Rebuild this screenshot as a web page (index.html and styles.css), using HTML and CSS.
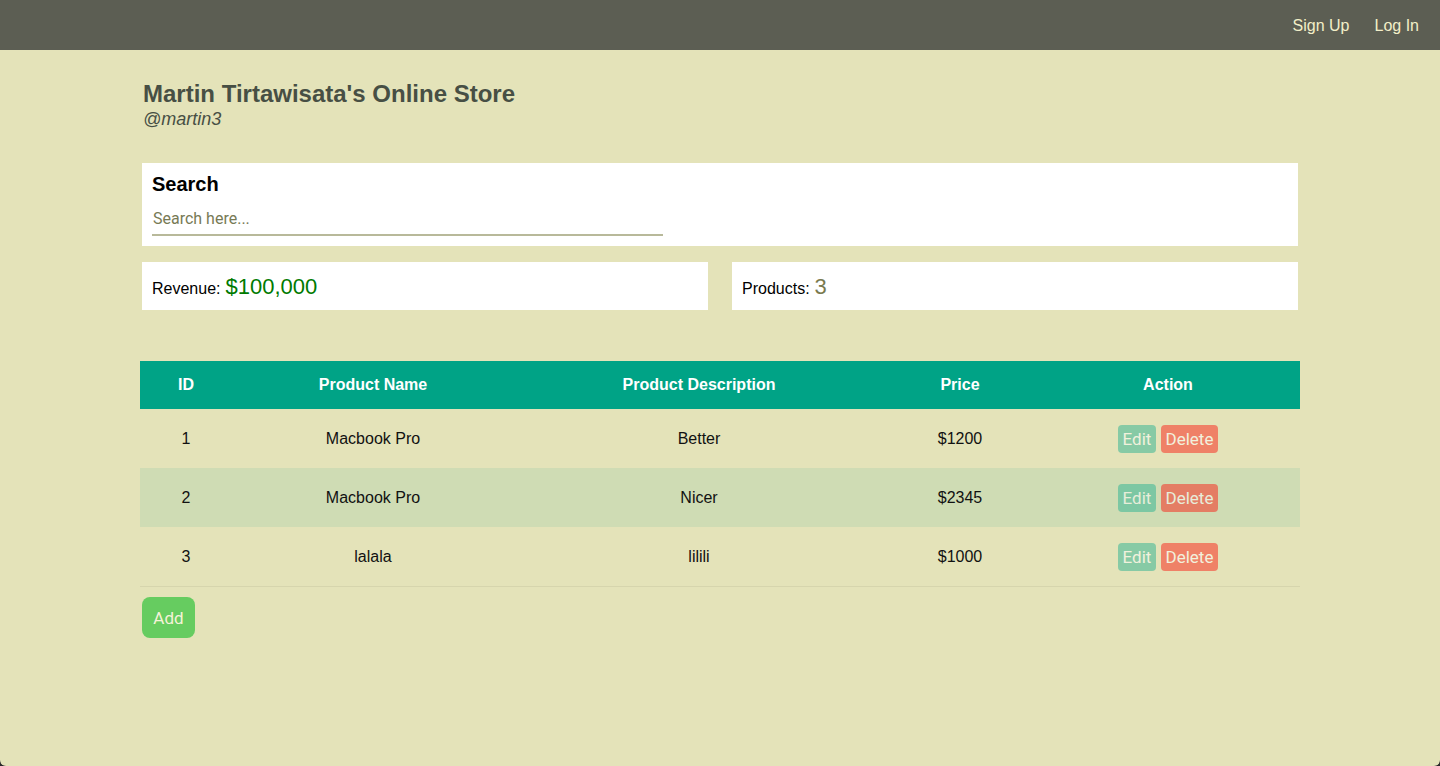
FILE: index.html
```html
<!DOCTYPE html>
<html lang="en">
<head>
<meta charset="utf-8">
<title>Martin Tirtawisata's Online Store</title>
<link rel="stylesheet" href="styles.css">
</head>
<body>
<div class="app">
  <nav class="navbar">
    <a class="nav-link" href="#">Sign Up</a>
    <a class="nav-link" href="#">Log In</a>
  </nav>
  <main class="container">
    <header class="store-header">
      <h1 class="store-title">Martin Tirtawisata's Online Store</h1>
      <div class="store-handle">@martin3</div>
    </header>
    <section class="card search-card">
      <h2 class="search-title">Search</h2>
      <input class="search-input" type="text" placeholder="Search here...">
    </section>
    <section class="stats">
      <div class="card stat-card">Revenue: <span class="stat-revenue">$100,000</span></div>
      <div class="card stat-card">Products: <span class="stat-products">3</span></div>
    </section>
    <table class="product-table">
      <colgroup>
        <col class="c-id"><col class="c-name"><col class="c-desc"><col class="c-price"><col class="c-action">
      </colgroup>
      <thead>
        <tr><th>ID</th><th>Product Name</th><th>Product Description</th><th>Price</th><th>Action</th></tr>
      </thead>
      <tbody>
        <tr><td>1</td><td>Macbook Pro</td><td>Better</td><td>$1200</td><td><button class="btn btn-edit">Edit</button><button class="btn btn-delete">Delete</button></td></tr>
        <tr class="alt"><td>2</td><td>Macbook Pro</td><td>Nicer</td><td>$2345</td><td><button class="btn btn-edit">Edit</button><button class="btn btn-delete">Delete</button></td></tr>
        <tr><td>3</td><td>lalala</td><td>lilili</td><td>$1000</td><td><button class="btn btn-edit">Edit</button><button class="btn btn-delete">Delete</button></td></tr>
      </tbody>
    </table>
    <button class="btn-add">Add</button>
  </main>
</div>
</body>
</html>
```
FILE: styles.css
```css
html {
  background: #2a2a2a;
}
body {
  margin: 0;
  font-family: "Liberation Sans", Arial, sans-serif;
}
.app {
  min-height: 766px;
  background: #e4e3b9;
  border-radius: 0 0 6px 6px;
  overflow: hidden;
}
.navbar {
  height: 50px;
  background: #5c5e53;
  display: flex;
  justify-content: flex-end;
  align-items: center;
  gap: 25px;
  padding-right: 21px;
  box-sizing: border-box;
}
.nav-link {
  color: #f3efc8;
  text-decoration: none;
  font-size: 16px;
  font-family: "Liberation Sans", Arial, sans-serif;
  padding-top: 2px;
}
.container {
  width: 1160px;
  margin: 0 auto;
  padding-top: 31px;
}
.store-header {
  padding-left: 3px;
}
.store-title {
  margin: 0;
  font-size: 24px;
  line-height: 26px;
  font-weight: bold;
  color: #474f44;
}
.store-handle {
  font-style: italic;
  font-size: 18px;
  line-height: 22px;
  color: #474f44;
  margin-top: 1px;
}
.card {
  background: #fff;
  box-sizing: border-box;
}
.search-card {
  margin: 33px 2px 0;
  height: 83px;
  padding: 10px 10px 0;
}
.search-title {
  margin: 0;
  font-size: 20px;
  line-height: 22px;
  font-weight: bold;
  color: #000;
}
.search-input {
  display: block;
  margin-top: 14px;
  width: 511px;
  box-sizing: border-box;
  border: none;
  border-bottom: 2px solid #b8b99a;
  padding: 0 1px 6px;
  font-family: Roboto, sans-serif;
  font-size: 16px;
  line-height: 19px;
  outline: none;
  background: transparent;
}
.search-input::placeholder {
  color: #777a55;
}
.stats {
  display: flex;
  gap: 24px;
  margin: 16px 2px 0;
}
.stat-card {
  flex: 1;
  height: 48px;
  padding: 6px 10px 0;
  display: flex;
  align-items: center;
  font-size: 16px;
  color: #000;
}
.stat-revenue {
  font-size: 22px;
  color: #007a00;
  margin-left: 5px;
  margin-top: -4px;
}
.stat-products {
  font-size: 22px;
  color: #7a7a4e;
  margin-left: 5px;
  margin-top: -4px;
}
.product-table {
  margin-top: 51px;
  width: 1160px;
  border-collapse: collapse;
  table-layout: fixed;
}
.c-id { width: 92px; }
.c-name { width: 282px; }
.c-desc { width: 370px; }
.c-price { width: 152px; }
.c-action { width: 264px; }
.product-table th {
  background: #00a386;
  color: #fff;
  font-weight: bold;
  font-size: 16px;
  height: 48px;
  padding: 0;
  text-align: center;
}
.product-table td {
  height: 59px;
  padding: 0;
  text-align: center;
  font-size: 16px;
  color: #111;
}
.product-table tbody tr:last-child td {
  border-bottom: 1px solid #d6d5ad;
  height: 58px;
  padding-top: 1px;
}
.product-table tr.alt td {
  background: #cfdcb4;
}
.btn {
  font-family: Roboto, sans-serif;
  font-size: 17px;
  color: #fff;
  border: none;
  border-radius: 4px;
  height: 28px;
  padding: 0;
  opacity: 0.5;
  cursor: pointer;
  vertical-align: middle;
}
.btn-edit {
  background: #2cb393;
  width: 38px;
}
.btn-delete {
  background: #fa2117;
  width: 57px;
  margin-left: 5px;
}
.btn-add {
  margin: 10px 0 0 2px;
  width: 53px;
  height: 41px;
  background: #66cc60;
  color: #f5f3d8;
  border: none;
  border-radius: 8px;
  font-family: Roboto, sans-serif;
  font-size: 17px;
  padding: 0;
  cursor: pointer;
}
```
